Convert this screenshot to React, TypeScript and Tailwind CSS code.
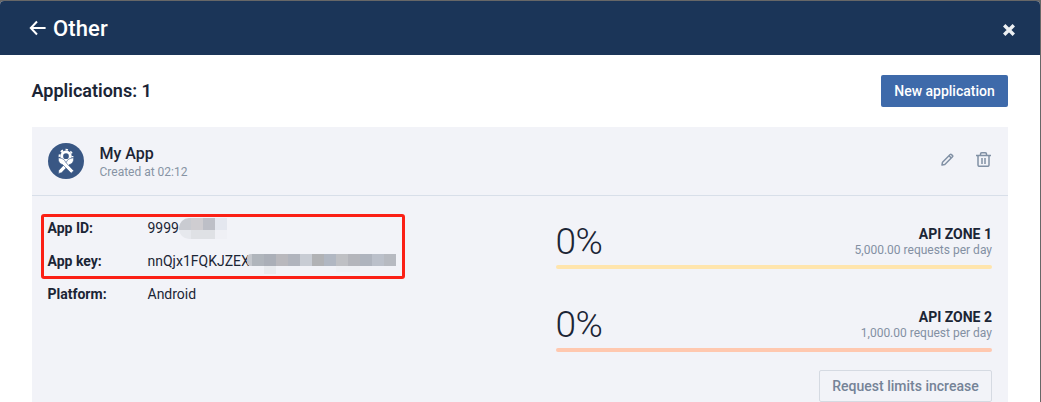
import React from 'react';

const idTiles = [
  'bg-[#c9cbd1]', 'bg-[#cfcdd1]', 'bg-[#bdbfc7]', 'bg-[#e4e7ef]',
  'bg-[#e6e8ed]', 'bg-[#dfe1e5]', 'bg-[#dfe1e5]', 'bg-[#eff0f5]',
];

const keyTiles = [
  'bg-[#b0b5bc]', 'bg-[#abafb8]', 'bg-[#b9b8bd]', 'bg-[#b1b4bd]', 'bg-[#c8ccd4]', 'bg-[#b1b2b5]',
  'bg-[#b1b7c2]', 'bg-[#bfc0c4]', 'bg-[#b4b5bb]', 'bg-[#afb4be]', 'bg-[#bbc0ca]', 'bg-[#b7bac1]',
];

function ArrowIcon() {
  return (
    <svg className="h-4 w-[17px]" viewBox="0 0 17 16" fill="none" stroke="#fff" strokeWidth="2">
      <path d="M16.6 8H2M8 1.5 1.8 8 8 14.5" />
    </svg>
  );
}

function CloseIcon() {
  return (
    <svg className="h-3 w-3" viewBox="0 0 12 12" stroke="#edf0f3" strokeWidth="3.4">
      <path d="M1.2 1.2 10.8 10.8M10.8 1.2 1.2 10.8" />
    </svg>
  );
}

function AppLogo() {
  return (
    <svg className="h-9 w-9" viewBox="0 0 36 36" fill="none">
      <circle cx="18" cy="18" r="18" fill="#395784" />
      <circle cx="18" cy="13.200" r="4.300" stroke="#fff" strokeWidth="2.900" />
      <circle cx="18" cy="13.200" r="6.500" stroke="#fff" strokeWidth="1.800" strokeDasharray="2.500 2.605" strokeDashoffset="1.250" />
      <path d="M25.600 14.800c.4 3.600-1.300 6.200-4.200 6.800L13.600 29.700l-3.200.7.400-3.200 7.500-7.900c.9-2.900 3.800-4.300 7.300-4.500Z" fill="#fff" stroke="#395784" strokeWidth=".6" />
      <path d="M10.400 14.800c-.4 3.600 1.300 6.200 4.200 6.800l8.600 8.600 2.500-2.500-8-8.400c-.9-2.900-3.800-4.300-7.300-4.500Z" fill="#fff" stroke="#395784" strokeWidth=".6" />
    </svg>
  );
}

function PencilIcon() {
  return (
    <svg className="h-[13px] w-[13px]" viewBox="0 0 13 13" fill="none" stroke="#8291a5" strokeWidth="1.5" strokeLinejoin="round">
      <path d="M1 12 1.500 9.200 9.200 1.500Q9.800.9 10.400 1.500L11.500 2.600Q12.100 3.200 11.500 3.800L3.800 11.500ZM8 2.700l2.300 2.300" />
    </svg>
  );
}

function TrashIcon() {
  return (
    <svg className="h-[15px] w-[15px]" viewBox="0 0 15 15" fill="none" stroke="#8090a4" strokeWidth="1.5">
      <path d="M0 3.500h15M4.500 3.500V2Q4.500.8 5.700.8h3.600Q10.500.8 10.500 2v1.500M2 3.500V13Q2 14.300 3.300 14.300h8.400Q13 14.300 13 13V3.500M6 6v6M9 6v6" />
    </svg>
  );
}

function Zone({ name, limit, bar }: { name: string; limit: string; bar: string }) {
  return (
    <div className="h-[83px]">
      <div className="flex h-[47px] justify-between">
        <div className="-ml-[0.5px] pt-1 text-[37px] leading-10 font-light tracking-[-0.5px]">0%</div>
        <div className="pt-[7px] text-right">
          <div className="text-sm leading-[18px] font-bold">{name}</div>
          <div className="text-xs leading-[14px] text-[#8390a3]">{limit}</div>
        </div>
      </div>
      <div className={`h-1 rounded-sm ${bar}`} />
    </div>
  );
}

export default function App() {
  return (
    <div className="h-[402px] w-[1041px] overflow-hidden bg-[#676767] pt-px pr-px font-['Roboto',sans-serif] text-[#1b2535]">
      <div className="h-[401px] overflow-hidden rounded-t bg-white">
        <header className="flex h-[54px] items-center justify-between bg-[#1b3558] pr-[25px] pl-[29px] text-white">
          <div className="flex items-center gap-[7px]">
            <ArrowIcon />
            <h1 className="pt-0.5 text-[22px] leading-8 font-medium tracking-[0.1px]">Other</h1>
          </div>
          <div className="pt-1"><CloseIcon /></div>
        </header>
        <main className="px-8 pt-5">
          <div className="flex h-8 items-center justify-between">
            <h2 className="-ml-[0.5px] text-lg font-semibold">Applications: 1</h2>
            <button className="h-8 w-[127px] rounded-xs bg-[#3e6aaa] text-sm font-medium whitespace-nowrap text-white">New application</button>
          </div>
          <section className="mt-5 h-[300px] bg-[#f2f3f8]">
            <div className="flex h-[69px] items-center border-b border-[#d8dfe9] pr-[17px] pl-4">
              <AppLogo />
              <div className="ml-[15.5px] flex-1 pt-0.5">
                <div className="text-base leading-5 font-medium">My App</div>
                <div className="text-xs leading-4 text-[#8793a4]">Created at 02:12</div>
              </div>
              <div className="flex items-center gap-[22px] pb-[3px]">
                <PencilIcon />
                <TrashIcon />
              </div>
            </div>
            <div className="flex justify-between pr-4 pl-[9px]">
              <div className="pt-[18px] text-sm">
                <div className="h-[65px] w-[364px] rounded-[3px] border-3 border-[#fb2015] pl-[3.5px]">
                  <div className="flex h-[29px] items-center pb-[7px]">
                    <div className="w-[99px] font-bold">App ID:</div>
                    <div className="relative pl-px">
                      9999
                      <div className="absolute top-0 left-[32.5px] grid w-12 grid-cols-4 grid-rows-[12px_9px] overflow-hidden rounded-l-[10px]">
                        {idTiles.map((tile, i) => <div key={i} className={tile} />)}
                      </div>
                    </div>
                  </div>
                  <div className="flex h-[30px] items-center">
                    <div className="w-[99px] font-bold">App key:</div>
                    <div className="relative pl-px">
                      nnQjx1FQKJZEX
                      <div className="absolute top-[3px] left-[100.5px] flex h-3 w-[149px] rounded-l bg-[#c4c7cd] pl-[5px]">
                        {keyTiles.map((tile, i) => <div key={i} className={`h-3 w-3 shrink-0 ${tile}`} />)}
                        <div className="absolute top-3 left-[17px] h-2 w-3 bg-[#e9ebef]" />
                        <div className="absolute top-3 left-[89px] h-1.5 w-6 bg-[#eff0f4]" />
                      </div>
                    </div>
                  </div>
                </div>
                <div className="flex h-[30px] items-center pl-[6.5px]">
                  <div className="w-[100px] font-bold">Platform:</div>
                  <div>Android</div>
                </div>
              </div>
              <div className="w-[436px] pt-[22px]">
                <Zone name="API ZONE 1" limit="5,000.00 requests per day" bar="bg-[#ffe5ad]" />
                <Zone name="API ZONE 2" limit="1,000.00 request per day" bar="bg-[#ffc8af]" />
                <button className="-mt-[14px] ml-auto block h-8 w-[173px] rounded-xs border border-[#d5dae2] text-sm font-medium whitespace-nowrap text-[#758397]">Request limits increase</button>
              </div>
            </div>
          </section>
        </main>
      </div>
    </div>
  );
}
